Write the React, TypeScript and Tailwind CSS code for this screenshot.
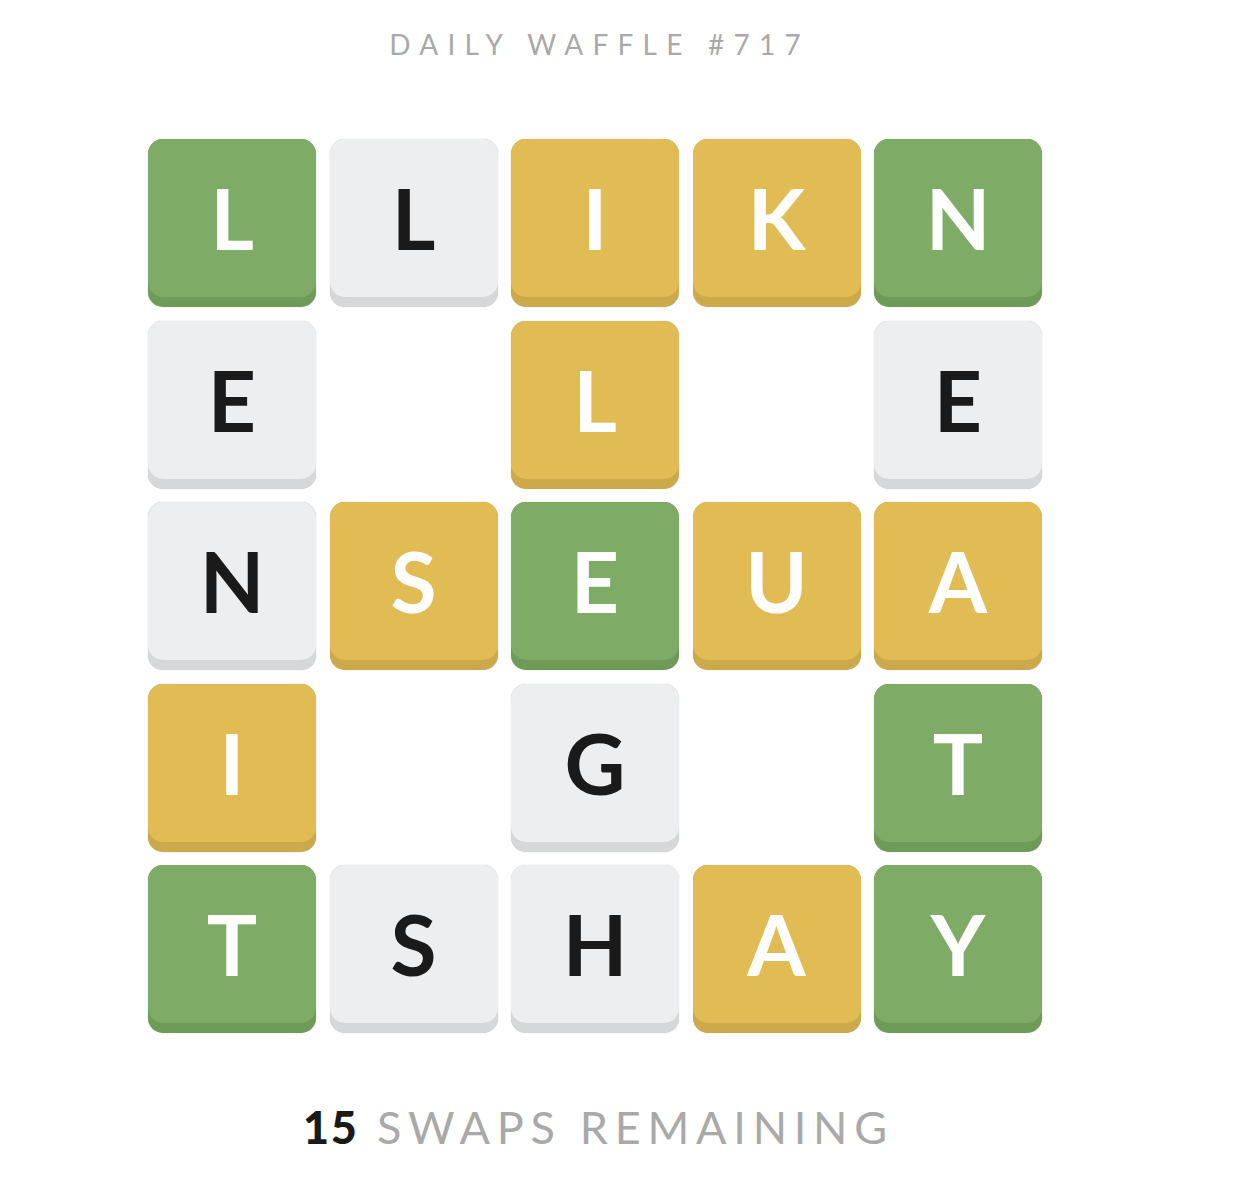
type Tone = "g" | "y" | "w";

const board: ([string, Tone] | null)[][] = [
  [["L", "g"], ["L", "w"], ["I", "y"], ["K", "y"], ["N", "g"]],
  [["E", "w"], null, ["L", "y"], null, ["E", "w"]],
  [["N", "w"], ["S", "y"], ["E", "g"], ["U", "y"], ["A", "y"]],
  [["I", "y"], null, ["G", "w"], null, ["T", "g"]],
  [["T", "g"], ["S", "w"], ["H", "w"], ["A", "y"], ["Y", "g"]],
];

const tones: Record<Tone, { base: string; face: string }> = {
  g: { base: "bg-[#6e9b58]", face: "bg-[#7eac66] text-white" },
  y: { base: "bg-[#cca94a]", face: "bg-[#e1bc55] text-white" },
  w: { base: "bg-[#d6d7d9]", face: "bg-[#edeef0] text-[#1a1a1a]" },
};

function Tile({ letter, tone }: { letter: string; tone: Tone }) {
  const t = tones[tone];
  return (
    <div className={`${t.base} h-[168px] w-[168px] rounded-[15px] shadow-[0_0_1px_rgba(0,0,0,0.3)]`}>
      <div
        className={`${t.face} flex h-[158px] items-center justify-center rounded-[15px] text-[84px] font-bold leading-none`}
      >
        {letter}
      </div>
    </div>
  );
}

export default function App() {
  return (
    <div className="min-h-[1190px] bg-white font-['Lato','Liberation_Sans',sans-serif]">
      <div className="flex w-[1190px] flex-col items-center pt-[27px]">
        {/* trailing tracking pushes text left, pad it back */}
        <h1 className="pl-[0.33em] text-[28px] font-normal leading-[34px] tracking-[0.33em] text-[#a9a9a9]">
          DAILY WAFFLE #717
        </h1>

        <div className="mt-[78px] grid grid-cols-[repeat(5,168px)] gap-[13.5px]">
          {board.flatMap((row, r) =>
            row.map((cell, c) =>
              cell ? (
                <Tile key={`${r}-${c}`} letter={cell[0]} tone={cell[1]} />
              ) : (
                <div key={`${r}-${c}`} className="h-[168px] w-[168px]" />
              )
            )
          )}
        </div>

        <div className="mt-[68px] pl-[0.15em] text-[45px] leading-[52px] tracking-[0.15em]">
          <span className="font-black tracking-[0.04em] text-[#1a1a1a]">15</span>{" "}
          <span className="text-[#a9a9a9]">SWAPS REMAINING</span>
        </div>
      </div>
    </div>
  );
}
